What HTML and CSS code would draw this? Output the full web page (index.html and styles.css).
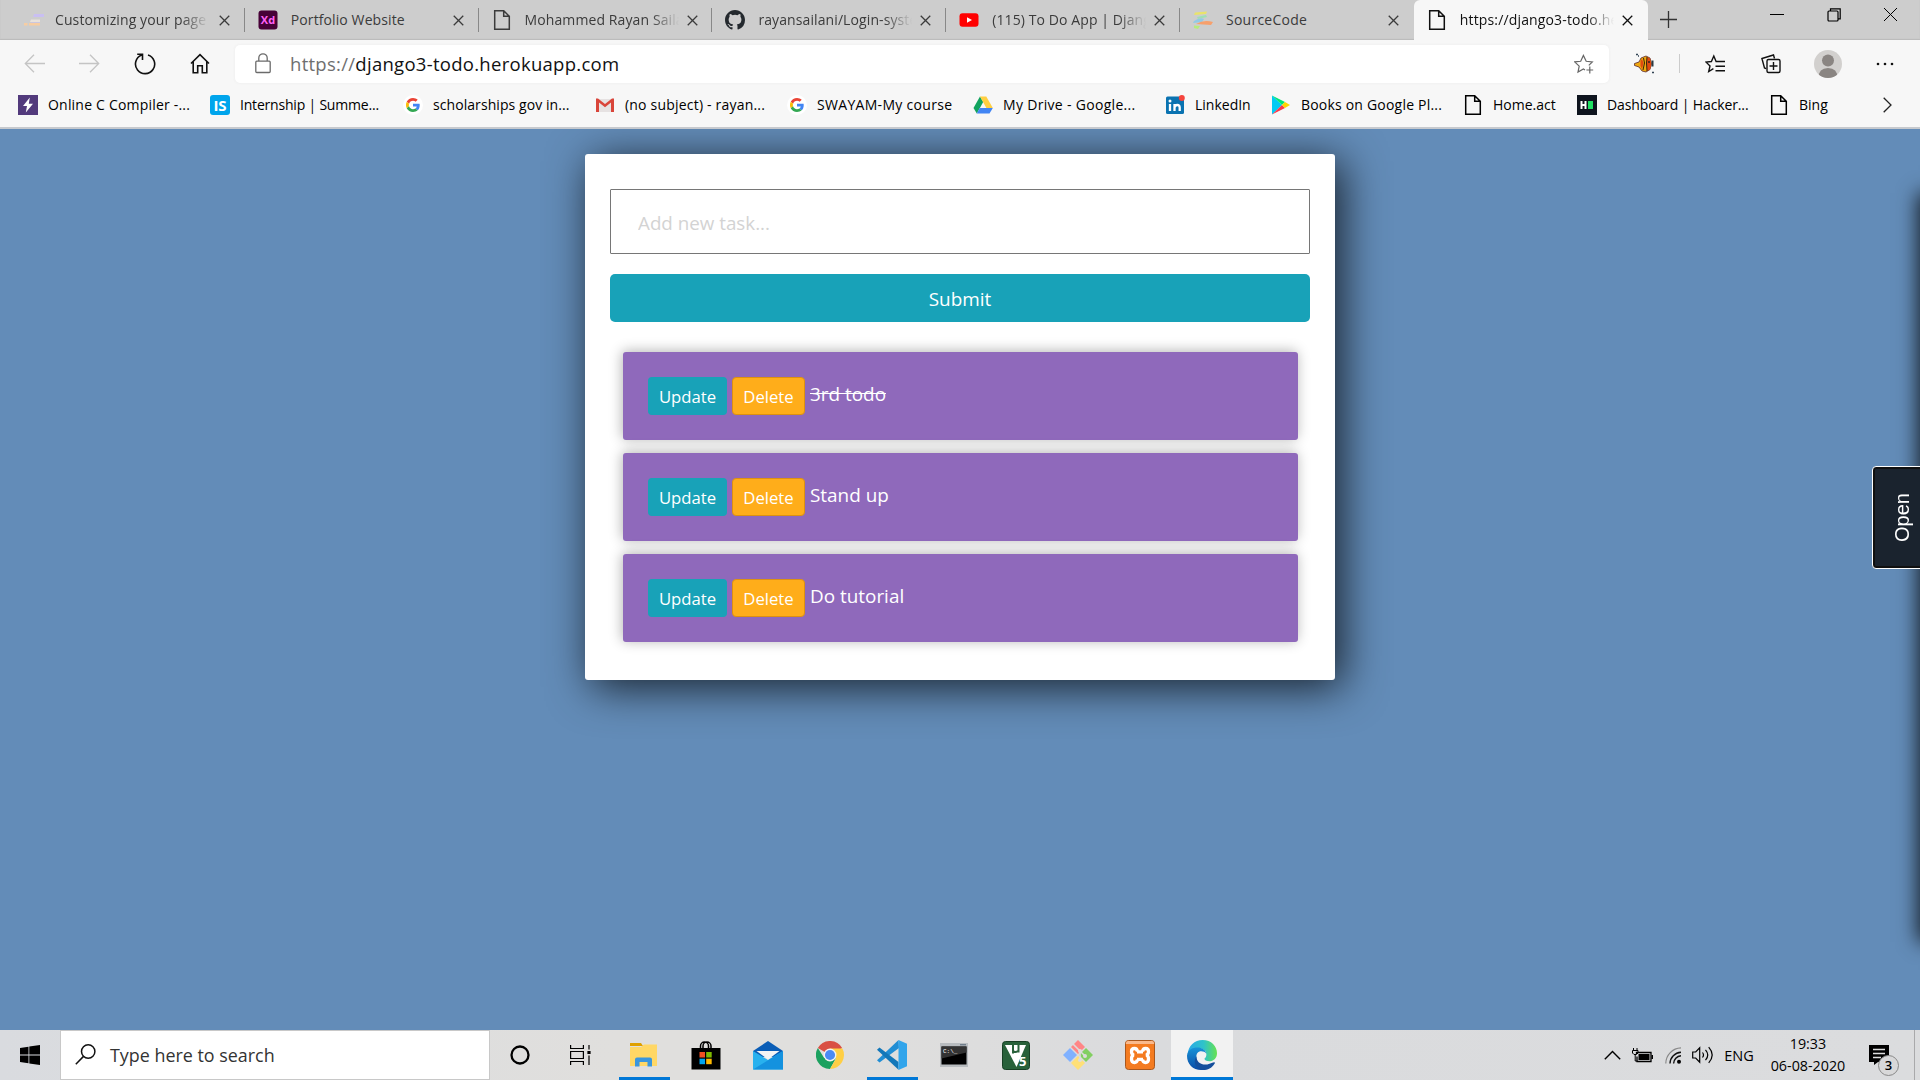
FILE: index.html
```html
<!DOCTYPE html>
<html lang="en">
<head>
<meta charset="utf-8">
<title>To Do</title>
<link rel="stylesheet" href="styles.css">
</head>
<body>
<svg width="0" height="0" class="defs" aria-hidden="true">
  <symbol id="page" viewBox="0 0 18 22"><path d="M1.7 1.7h9l5.6 5.6v13H1.7zM10.7 1.7v5.6h5.6" fill="none" stroke="currentColor" stroke-width="1.5"/></symbol>
  <symbol id="x" viewBox="0 0 12 12"><path d="M.8.8l10.4 10.4M11.2.8L.8 11.2" fill="none" stroke="currentColor" stroke-width="1.4"/></symbol>
  <symbol id="google" viewBox="0 0 48 48"><path fill="#EA4335" d="M24 9.5c3.5 0 6.700 1.200 9.200 3.600l6.900-6.900C35.900 2.400 30.500 0 24 0 14.600 0 6.500 5.400 2.600 13.200l8 6.200C12.400 13.700 17.700 9.500 24 9.500z"/><path fill="#4285F4" d="M47 24.500c0-1.600-.2-3.100-.4-4.500H24v9h12.900c-.6 3-2.200 5.500-4.700 7.200l7.700 6C44.400 38 47 32 47 24.500z"/><path fill="#FBBC05" d="M10.500 28.600c-.5-1.500-.8-3-.8-4.600s.3-3.100.8-4.600l-8-6.200C.9 16.500 0 20.100 0 24s.9 7.500 2.600 10.800z"/><path fill="#34A853" d="M24 48c6.500 0 11.900-2.100 15.900-5.800l-7.700-6c-2.200 1.500-4.900 2.300-8.200 2.300-6.300 0-11.600-4.200-13.500-9.900l-8 6.200C6.500 42.600 14.600 48 24 48z"/></symbol>
</svg>

<header class="browser">
  <div class="tabs">
    <div class="tab">
      <svg class="favicon" viewBox="0 0 20 20" width="20" height="20"><path d="M10 4h10v3H9zM7 10.500h9v2H7z" fill="#c9bff2"/><path d="M7 9.500h9v2.500H6z" fill="#e8e2dc"/><path d="M5 13h11v2.600H5zM0 13h3.500v2.600H0z" fill="#f7cda2"/></svg>
      <span class="tab-title fade t1">Customizing your page</span><svg class="close" width="11" height="11"><use href="#x"/></svg>
    </div>
    <div class="tab">
      <svg class="favicon" viewBox="0 0 20 20" width="20" height="20"><rect x=".5" y=".5" width="19" height="19" rx="3" fill="#470137"/><text x="10" y="14.300" text-anchor="middle" class="xd">Xd</text></svg>
      <span class="tab-title t2">Portfolio Website</span><svg class="close" width="11" height="11"><use href="#x"/></svg>
    </div>
    <div class="tab">
      <span class="favicon"><svg width="18" height="22"><use href="#page"/></svg></span>
      <span class="tab-title fade t3">Mohammed Rayan Sailani</span><svg class="close" width="11" height="11"><use href="#x"/></svg>
    </div>
    <div class="tab">
      <svg class="favicon" viewBox="0 0 16 16" width="20" height="20"><path fill="#24292e" d="M8 0C3.580 0 0 3.580 0 8c0 3.540 2.290 6.530 5.470 7.590.4.070.55-.17.55-.38 0-.19-.01-.82-.01-1.490-2.010.37-2.530-.49-2.690-.94-.09-.23-.48-.94-.82-1.130-.28-.15-.68-.52-.01-.53.63-.01 1.080.58 1.230.82.72 1.210 1.870.87 2.330.66.070-.52.28-.87.51-1.070-1.780-.2-3.640-.89-3.640-3.950 0-.87.31-1.590.82-2.150-.08-.2-.36-1.020.08-2.120 0 0 .67-.21 2.200.82a7.600 7.600 0 0 1 4 0c1.530-1.040 2.200-.82 2.200-.82.44 1.100.16 1.920.08 2.120.51.56.82 1.270.82 2.150 0 3.070-1.870 3.750-3.650 3.950.29.25.54.73.54 1.480 0 1.070-.01 1.930-.01 2.200 0 .21.15.46.55.38A8.010 8.010 0 0 0 16 8c0-4.420-3.580-8-8-8z"/></svg>
      <span class="tab-title fade t4">rayansailani/Login-system</span><svg class="close" width="11" height="11"><use href="#x"/></svg>
    </div>
    <div class="tab">
      <svg class="favicon" viewBox="0 0 20 20" width="20" height="20"><rect x=".5" y="3.200" width="19" height="13.600" rx="3" fill="#f00"/><path d="M8 7.200v5.600l5-2.800z" fill="#fff"/></svg>
      <span class="tab-title fade t5">(115) To Do App | Django</span><svg class="close" width="11" height="11"><use href="#x"/></svg>
    </div>
    <div class="tab">
      <svg class="favicon" viewBox="0 0 20 20" width="20" height="20"><path d="M2 2.500l12-1-1 2.500-12 1z" fill="#e9e36b"/><path d="M4 7l9-2 1 2-9 2z" fill="#9fe0b4"/><path d="M1 11q6-4 10-2l-2 3-9 1z" fill="#94c9e4"/><path d="M3 14q8-5 17-2l-2 3z" fill="#f7a06c"/><path d="M1 15.500l6 .5-2 3-4-1z" fill="#b6ec7c"/></svg>
      <span class="tab-title t6">SourceCode</span><svg class="close" width="11" height="11"><use href="#x"/></svg>
    </div>
    <div class="tab active">
      <span class="favicon"><svg width="18" height="22"><use href="#page"/></svg></span>
      <span class="tab-title fade t7">https://django3-todo.herokuapp.com</span><svg class="close" width="11" height="11"><use href="#x"/></svg>
    </div>
    <div class="new-tab"><svg width="17" height="17"><path d="M8.500 0v17M0 8.500h17" stroke="#333" stroke-width="1.300"/></svg></div>
    <div class="window-controls">
      <svg width="14" height="14"><path d="M0 6.500h14" stroke="#000"/></svg>
      <svg width="14" height="14" fill="none" stroke="#000" stroke-width="1.200"><rect x="1" y="3" width="10" height="10" rx="1"/><path d="M3.500 3V.8h9.700v10H11"/></svg>
      <svg width="13" height="13"><path d="M0 0l13 13M13 0L0 13" stroke="#000"/></svg>
    </div>
  </div>

  <div class="toolbar">
    <span class="tool off"><svg width="21" height="19" fill="none" stroke="currentColor" stroke-width="1.300"><path d="M21 9.500H1.500M10 .8L1.300 9.500l8.700 8.700"/></svg></span>
    <span class="tool off"><svg width="21" height="19" fill="none" stroke="currentColor" stroke-width="1.300"><path d="M0 9.500h19.500M11 .8l8.700 8.700-8.700 8.700"/></svg></span>
    <span class="tool"><svg width="22" height="22" fill="none" stroke="currentColor" stroke-width="1.600"><path d="M14 1.900A9.600 9.600 0 1 1 7.600 2.100M3.200 1.300h5.300v5.600"/></svg></span>
    <span class="tool"><svg width="20" height="21" fill="none" stroke="currentColor" stroke-width="1.600"><path d="M1 10.500L10 1.600l9 8.900M3.200 8.800v10.900h4.500v-7h4.600v7h4.500V8.800"/></svg></span>
    <div class="address">
      <svg class="lock" width="16" height="21" fill="none" stroke="#6b6b6b" stroke-width="1.300"><rect x=".8" y="8.200" width="14.400" height="11.300" rx="1"/><path d="M3.800 8V5a4.200 4.200 0 0 1 8.400 0v3"/></svg>
      <span class="url"><i>https://</i>django3-todo.herokuapp.com</span>
      <svg class="add-fav" width="20" height="20" fill="none" stroke="#666" stroke-width="1.200"><path d="M14.800 11.400l3.500-3.500-6.100-.6L9.400 1.400 6.700 7.300l-6 .6 4.500 4.200-1.200 6 5.400-3.100 1.600.9M15.800 12.600v6.800M12.400 16h6.800"/></svg>
    </div>
    <span class="tool fish"><svg width="22" height="22"><path d="M1.500 10.500l4.500-1.500 2-4 5-2 4 2 1.500 5.500-1.500 6-4 2.500-4-1-3-4-4.500-1.500z" fill="#f0a80f" stroke="#412" stroke-width=".7"/><path d="M14 4l3 1.500 1.500 5.500-1.500 5.500-3 1.500zM9 6l1.500 4-1.500 6-1.500-3V8z" fill="#e04a10"/><path d="M10.500 5l1 5-1.500 7M14 4l-.5 6 .5 8" stroke="#36200a" fill="none"/><path d="M18.500 7.500h2v6h-2z" fill="#293a42"/><path d="M3 1.500h2M19 19.500h2M5 3h1" stroke="#345" stroke-width="1.700"/><circle cx="16" cy="9" r=".9" fill="#222"/></svg></span>
    <span class="rule"></span>
    <span class="tool"><svg width="21" height="20" fill="none" stroke="currentColor" stroke-width="1.400"><path d="M8.400 14.700l-4.700 2.900 1.300-5.700L.9 8l5.500-.5L8.800 2l2.300 5.500H20M10.500 12.300H20M10.500 16.700H20"/></svg></span>
    <span class="tool collect"><svg width="20" height="20" fill="none" stroke="currentColor" stroke-width="1.400"><path d="M5.200 14.700L3.500 14 .9 4.500 12.500 1l1 3.500"/><rect x="6" y="5.500" width="13" height="13" rx="1.500"/><path d="M12.500 8v8M8.500 12h8"/></svg></span>
    <span class="tool avatar"><svg width="28" height="28"><defs><clipPath id="face"><circle cx="14" cy="14" r="14"/></clipPath></defs><g clip-path="url(#face)"><rect width="28" height="28" fill="#d2d0ce"/><circle cx="14" cy="10.500" r="6" fill="#8a8582"/><path d="M4.500 28q0-10 9.500-10t9.500 10z" fill="#8a8582"/></g></svg></span>
    <span class="tool more"><svg width="20" height="4" fill="#111"><circle cx="3" cy="2" r="1.300"/><circle cx="10" cy="2" r="1.300"/><circle cx="17" cy="2" r="1.300"/></svg></span>
  </div>

  <nav class="bookmarks">
    <a><svg width="20" height="20"><path d="M0 0h20v20H0z" fill="#523a7c"/><path d="M11.800 2.500L5 11h4l-1.200 6.500L15 8.800h-4.200z" fill="#fff"/></svg><span class="b1">Online C Compiler -...</span></a>
    <a><svg width="20" height="20"><rect width="20" height="20" rx="3" fill="#00a5ec"/><text x="10" y="15.500" text-anchor="middle" class="is">IS</text></svg><span class="b2">Internship | Summe...</span></a>
    <a><svg width="20" height="20"><circle cx="10" cy="10" r="10" fill="#fff"/><use href="#google" x="3" y="3" width="14" height="14"/></svg><span class="b3">scholarships gov in...</span></a>
    <a><svg width="20" height="20"><path d="M1 4h18v13H1z" fill="#e6e2e2"/><path d="M1 17V3.500h2L10 9l7-5.500h2V17h-3V7.500l-6 4.700-6-4.700V17z" fill="#d9453a"/></svg><span class="b4">(no subject) - rayan...</span></a>
    <a><svg width="20" height="20"><circle cx="10" cy="10" r="10" fill="#fff"/><use href="#google" x="3" y="3" width="14" height="14"/></svg><span class="b5">SWAYAM-My course</span></a>
    <a><svg width="20" height="20"><path d="M7 1.500L.5 13l3.300 5.500L10.200 7z" fill="#11a35e"/><path d="M7 1.500h6.300L19.800 13h-6.400z" fill="#ffcf42"/><path d="M6.800 13h13l-3.300 5.500H3.700z" fill="#4285f4"/></svg><span class="b6">My Drive - Google...</span></a>
    <a><svg width="20" height="20"><rect x="1" y="1.500" width="18" height="17.500" rx="1.500" fill="#0a73b1"/><path d="M5 9v7M9.500 16V9M9.500 12.500q.5-2.500 2.800-2.500t2.400 2.500V16" stroke="#fff" stroke-width="2.300" fill="none"/><circle cx="5" cy="6" r="1.500" fill="#fff"/><circle cx="16.800" cy="3" r="3" fill="#f5443d"/></svg><span class="b7">LinkedIn</span></a>
    <a><svg width="20" height="20"><path d="M1 .5v19L11 10z" fill="#00cbf3"/><path d="M1 .5L14 7l-3 3z" fill="#00e577"/><path d="M1 19.500L14 13l-3-3z" fill="#f8384c"/><path d="M14 7l5 3-5 3-3-3z" fill="#ffd500"/></svg><span class="b8">Books on Google Pl...</span></a>
    <a><svg width="20" height="22"><use href="#page" x="1" width="18" height="22"/></svg><span class="b9">Home.act</span></a>
    <a><svg width="20" height="20"><path d="M0 0h20v20H0z" fill="#0e141e"/><path d="M4.500 6v8M8.500 6v8M4.500 10h4" stroke="#fff" stroke-width="2"/><path d="M11 6h5v8h-5z" fill="#1fe062"/></svg><span class="b10">Dashboard | Hacker...</span></a>
    <a><svg width="20" height="22"><use href="#page" x="1" width="18" height="22"/></svg><span class="b11">Bing</span></a>
    <svg class="overflow" width="9" height="16"><path d="M.7.700L8 8 .7 15.300" fill="none" stroke="#222" stroke-width="1.300"/></svg>
  </nav>
</header>

<main class="page">
  <section class="card">
    <form class="add-task">
      <input type="text" placeholder="Add new task...">
      <button type="button" class="submit">Submit</button>
    </form>
    <div class="tasks">
      <div class="task"><a class="btn update">Update</a><a class="btn delete">Delete</a><span class="name"><s>3rd todo</s></span></div>
      <div class="task"><a class="btn update">Update</a><a class="btn delete">Delete</a><span class="name">Stand up</span></div>
      <div class="task"><a class="btn update">Update</a><a class="btn delete">Delete</a><span class="name">Do tutorial</span></div>
    </div>
  </section>
  <div class="drawer"></div>
  <button type="button" class="open"><span>Open</span></button>
</main>

<footer class="taskbar">
  <span class="start"><svg width="20" height="20"><path d="M0 3l8.500-1.200v7.800H0zM9.300 1.600L20 0v9.600H9.300zM0 10.400h8.500v7.900L0 17zM9.300 10.400H20V20L9.300 18.400z"/></svg></span>
  <div class="search"><svg width="21" height="21" fill="none" stroke="#111" stroke-width="1.500"><circle cx="13.200" cy="7.500" r="6.700"/><path d="M8.500 12.400L.8 20.200"/></svg><span>Type here to search</span></div>
  <div class="apps">
    <span class="app cortana"><svg width="20" height="20"><circle cx="10" cy="10" r="8.500" fill="none" stroke="#000" stroke-width="2.300"/></svg></span>
    <span class="app view"><svg width="21" height="20" fill="none" stroke="#000" stroke-width="1.200"><path d="M.6 0v3.500h12.800V0M.6 20v-3.500h12.800V20M.6 6.500h12.800v7H.6zM19 0v4.500M19 10.500V20"/><path d="M17.400 6h3.200v3h-3.200z" fill="#000" stroke="none"/></svg></span>
    <span class="app running"><svg width="28" height="24"><path d="M0 0h11l2 3H0z" fill="#dfa000"/><path d="M0 4h11l3-2.500h13V23H0z" fill="#ffd765"/><path d="M5 23.500v-7q0-2 2-2h13q2 0 2 2v7h-4.500V19h-8v4.500z" fill="#3a96dd"/></svg></span>
    <span class="app"><svg width="30" height="30"><path d="M9.500 9V6a4 4 0 0 1 8 0v3M12 9V6a4 4 0 0 1 8 0v3" fill="none" stroke="#000" stroke-width="1.500"/><path d="M.5 8h29v21.500H.5z"/><path d="M8.500 12h5.500v5.500H8.500z" fill="#f25022"/><path d="M15.200 12h5.500v5.500h-5.500z" fill="#7fba00"/><path d="M8.500 18.700h5.500v5.500H8.500z" fill="#00a4ef"/><path d="M15.200 18.700h5.500v5.500h-5.500z" fill="#ffb900"/></svg></span>
    <span class="app"><svg width="30" height="30"><path d="M0 11L15 1l15 10v6H0z" fill="#0a5db6"/><path d="M0 11l15 9 15-9v18.500H0z" fill="#28b1ee"/><path d="M0 29.500L30 11v18.500z" fill="#1492df"/><path d="M3.500 11h23L15 19.500z" fill="#f4f4f4"/></svg></span>
    <span class="app"><svg width="28" height="28" viewBox="0 0 48 48"><path d="M24 24L3.200 12A24 24 0 0 1 44.800 12z" fill="#d94f43"/><path d="M3.200 12A24 24 0 0 0 24 48l10-18-20-1z" fill="#1ca15f"/><path d="M24 13h21.300A24 24 0 0 1 24 48l10.400-18z" fill="#ffcf44"/><circle cx="24" cy="24" r="11" fill="#f3f3f3"/><circle cx="24" cy="24" r="8.700" fill="#4b8bf5"/></svg></span>
    <span class="app running"><svg width="30" height="30"><path d="M21.500 0L3 17.500l-3 2.700 2.500 2.300L22 8z" fill="#218ed4"/><path d="M2.500 7.500L0 9.800l21.500 20V22z" fill="#1277b9"/><path d="M21.500 0L30 3.700v22.600L21.500 30z" fill="#32a5eb"/></svg></span>
    <span class="app"><svg width="28" height="24"><path d="M0 0h28v24H0z" fill="#b8bcbf"/><path d="M1.500 3.500h25v18h-25z" fill="#000"/><path d="M1.500 3.500h25v6l-25 6z" fill="#333"/><path d="M20 1.800h6" stroke="#567"/><text x="3" y="9.500" class="prompt">C:\_</text></svg></span>
    <span class="app"><svg width="28" height="29"><rect x=".5" y=".5" width="27" height="28" rx="3" fill="#28613a" stroke="#173f24"/><path d="M3 4h21L14.500 26z" fill="#fff"/><path d="M11 4v8.500M11 10q2.500 2 5 0M16.500 4v7.500" fill="none" stroke="#28613a" stroke-width="2"/><text x="17" y="25" class="five">5</text></svg></span>
    <span class="app"><svg width="30" height="30"><path d="M15 0l7 7-7 7-7-7z" fill="#ff8686"/><path d="M7 8l7 7-7 7-7-7z" fill="#80b1ff"/><path d="M23 8l7 7-7 7-7-7z" fill="#83cf62"/><path d="M15 16l7 7-7 7-7-7z" fill="#ffe077"/><path d="M10 4l7 7v9M17 11l5 5" stroke="#dddcdc" stroke-width="1.600" fill="none"/><g fill="#dddcdc"><circle cx="17" cy="11" r="2"/><circle cx="17" cy="20" r="2"/><circle cx="22" cy="16" r="2"/></g></svg></span>
    <span class="app"><svg width="30" height="30"><rect x=".5" y=".5" width="29" height="29" rx="3" fill="#f47b20" stroke="#a9571d"/><path d="M1 4V3q0-2 2-2h24q2 0 2 2v1z" fill="#f9b98c"/><path d="M12.500 11.500Q12 8.500 9.500 8.500 6.500 8.500 6.500 11.500T9 15.200Q6.500 15.500 6.500 19T9.500 22.500Q12 22.500 12.500 19.500M17.500 11.500Q18 8.500 20.500 8.500 23.500 8.500 23.500 11.500T21 15.200Q23.500 15.500 23.500 19T20.500 22.500Q18 22.500 17.500 19.500M12 11.800h6M12 19.300h6" fill="none" stroke="#fff" stroke-width="3.300"/></svg></span>
    <span class="app running current"><svg width="30" height="30" viewBox="0 0 48 48"><defs><linearGradient id="e1" x1="0" x2="1"><stop offset="0" stop-color="#27a8e8"/><stop offset=".55" stop-color="#2fc3c9"/><stop offset="1" stop-color="#67e24f"/></linearGradient><linearGradient id="e2" y2="1" x2="0"><stop stop-color="#1793d8"/><stop offset="1" stop-color="#0b4ba5"/></linearGradient></defs><path d="M1 23C2 9 12 0 25 0c14 0 23 10 23 21 0 8-6 13-12 13-5 0-8-2-8-4 0-1 3-2 3-7 0-6-5-10-12-10C10 13 3 18 1 23z" fill="url(#e1)"/><path d="M0 25c1-9 8-13 17-13 7 0 13 4 14 10-2-3-5-4-8-4-6 0-8 4-8 9 0 12 11 18 18 16-2 3-6 5-10 5C9 48 0 38 0 25z" fill="url(#e2)"/><path d="M15 26c0 11 11 16 21 12 4-1 7-3 8-2 1 0 1 1 0 2-4 7-11 10-18 10-10 0-18-11-11-22z" fill="#154f9c"/></svg></span>
  </div>
  <div class="tray">
    <svg class="up" width="17" height="10"><path d="M.8 9.200l7.700-7.700 7.700 7.700" fill="none" stroke="#000" stroke-width="1.400"/></svg>
    <svg class="battery" width="21" height="15"><path d="M4.500 6V4.500H19v9H5V8.500" fill="none" stroke="#000" stroke-width="1.300"/><path d="M6.500 6h11v6H6.500zM19.500 7H21v4h-1.500z"/><path d="M1.500 0v2M5 0v2M.5 2.500H6V5L4.500 6.500H2L.5 5zM3.200 6v7h2" fill="none" stroke="#000"/></svg>
    <svg class="wifi" width="17" height="17" fill="none"><path d="M.8 16.500A15.700 15.700 0 0 1 16 .9" stroke="#888" stroke-width="1.200"/><path d="M5 16.500A11.500 11.500 0 0 1 16 5.200M8.600 16.500a8 8 0 0 1 7.400-7.800" stroke="#111" stroke-width="1.400"/><circle cx="14" cy="14.800" r="2" fill="#000"/></svg>
    <svg class="volume" width="22" height="18" fill="none" stroke="#000" stroke-width="1.200"><path d="M.7 6h3l4-4.200v14.400l-4-4.200h-3zM10.500 6.500q2 2.500 0 5M13.500 3.800q4.500 5.200 0 10.400M16.700 1.200q7 7.800 0 15.600"/></svg>
    <span class="lang">ENG</span>
    <div class="clock"><span>19:33</span><span>06-08-2020</span></div>
    <div class="notify"><svg width="20" height="20"><path d="M0 0h20v17H9l-4 3v-3H0z"/><path d="M4 4.500h12M4 8.500h12M4 12.500h8" stroke="#ddd" stroke-width="1.400"/></svg><b>3</b></div>
  </div>
</footer>
</body>
</html>
```
FILE: styles.css
```css
* { box-sizing: border-box; }
body { margin: 0; width: 1920px; height: 1080px; overflow: hidden; display: flex; flex-direction: column; font-family: "Open Sans", "Noto Sans", sans-serif; color: #000; }
.defs { position: absolute; }
svg { display: block; flex: none; }

.browser { height: 129px; flex: none; background: #f7f7f7; border-bottom: 2px solid #c6c9ce; }
.tabs { height: 40px; display: flex; background: #cdcdcd; box-shadow: inset 0 -1px 1px #bbb; padding-left: 11px; }
.tab { position: relative; width: 233.8px; height: 40px; padding: 0 14px 0 13px; display: flex; align-items: center; color: #3b3b3b; flex: none; }
.tab:first-child .tab-title { margin-left: -1px; margin-right: 10px; }
.tab:not(.active)::after { content: ""; position: absolute; right: 0; top: 8px; height: 24px; border-right: 1px solid #888; }
.tab:nth-child(6)::after { display: none; }
.tab.active { background: #f7f7f7; border-radius: 6px 6px 0 0; color: #111; }
.favicon { width: 20px; margin-right: 12px; display: flex; justify-content: center; flex: none; }
.tab-title { width: 154px; overflow: hidden; white-space: nowrap; font-size: 14px; margin-left: 1px; margin-right: 8px; line-height: 22px; letter-spacing: .1px; }
.t6 { letter-spacing: .25px; }
.t7 { letter-spacing: .15px; }
.fade { -webkit-mask-image: linear-gradient(90deg, #000 82%, transparent); mask-image: linear-gradient(90deg, #000 82%, transparent); }
.xd { font: bold 11px "Open Sans", sans-serif; fill: #ff61f6; }
.is { font: bold 15px "Open Sans", sans-serif; fill: #fff; }
.new-tab { padding: 11px 0 0 12px; }
.window-controls { margin-left: auto; display: flex; gap: 43px; padding: 8px 23px 0 0; }

.toolbar { height: 47px; display: flex; align-items: center; padding-left: 7px; color: #111; }
.tool { width: 55px; display: flex; justify-content: center; flex: none; }
.off { color: #c4c4c4; }
.address { width: 1374px; height: 38px; margin-left: 8px; background: #fff; border-radius: 5px; display: flex; align-items: center; padding: 0 15px 0 20px; box-shadow: 0 0 3px #eaeaea; }
.url { margin-left: 19px; font-size: 18.500px; line-height: 30px; letter-spacing: .28px; }
.url i { font-style: normal; color: #6f6f6f; }
.add-fav { margin-left: auto; }
.fish { width: 54px; margin-left: 8px; }
.rule { width: 1px; height: 19px; background: #ccc; margin: 0 8px; }
.collect { width: 56px; }
.avatar, .more { width: 57px; }

.bookmarks { display: grid; grid-template-columns: 192px 193px 192px 192px 186px 192px 106px 192px 114px 192px 114px 1fr; align-items: center; height: 36px; padding-left: 18px; }
.bookmarks a { display: flex; align-items: center; gap: 10px; white-space: nowrap; font-size: 14px; line-height: 22px; }
.b1, .b4, .b8 { letter-spacing: .2px; }
.b2 { letter-spacing: -.2px; }
.b3 { letter-spacing: .07px; }
.b5, .b6 { letter-spacing: .31px; }
.b10 { letter-spacing: -.12px; }

.page { position: relative; flex: 1; overflow: hidden; background: #638cb8; padding-top: 25px; }
.card { width: 750px; height: 526px; margin: 0 auto; background: #fff; border-radius: 3px; padding: 35px 25px; box-shadow: 7px 7px 44px rgba(0, 0, 0, .78); }
.add-task { display: flex; flex-direction: column; gap: 20px; }
.add-task input { height: 65px; border: 1px solid #767676; border-radius: 1px; padding: 2px 27px 0; font: 18.800px "Open Sans", sans-serif; outline: 0; }
.add-task input::placeholder { color: #d3d3d3; opacity: 1; }
.submit { height: 48px; border: 0; border-radius: 5px; background: #18a2b8; color: #fff; font: 18.900px "Open Sans", sans-serif; padding-top: 2px; }
.tasks { display: flex; flex-direction: column; gap: 13px; padding: 30px 12px 0 13px; }
.task { height: 88px; border-radius: 3px; background: #8f69bb; color: #fff; padding: 25px; display: flex; gap: 5px; box-shadow: -1px -1px 13px rgba(0, 0, 0, .3); }
.btn { height: 38px; border-radius: 4px; font-size: 16.700px; line-height: 39px; text-align: center; }
.update { width: 79px; background: #18a2b8; }
.delete { width: 73px; background: #ffad1a; border: 1px solid #dd9110; line-height: 37px; }
.name { font-size: 18.900px; line-height: 35px; }
.drawer { position: absolute; left: 1920px; top: 66px; width: 300px; height: 745px; box-shadow: 0 0 19px 2px rgba(0, 0, 0, .8); }
.open { position: absolute; left: 1872px; top: 337px; width: 58px; height: 103px; background: #1a232e; border: 1px solid #fff; border-radius: 4px; box-shadow: inset 0 0 0 2px #101010; padding: 0; color: #fff; }
.open span { display: block; writing-mode: vertical-rl; transform: rotate(180deg); font: 20px/22px "Liberation Sans", Arial, sans-serif; width: 22px; margin: 0 0 0 18px; text-align: center; }

.taskbar { height: 50px; flex: none; display: flex; background: linear-gradient(90deg, #d9dbdf, #e0dfdd 32%, #e0dfdd 42%, #dadbdd 60%, #dbdcde); }
.start { width: 60px; display: flex; align-items: center; justify-content: center; }
.search { width: 430px; background: #fff; border: 1px solid #c8c8c8; display: flex; align-items: center; padding: 0 0 1px 14px; gap: 14px; color: #333; font-size: 17.900px; }
.apps { display: flex; }
.app { width: 62px; display: flex; align-items: center; justify-content: center; position: relative; }
.cortana { width: 60px; }
.view { margin-right: 1px; left: -1px; }
.running::after { content: ""; position: absolute; left: 6px; right: 5px; bottom: 0; height: 3px; background: #0078d7; }
.current { background: #f2f2f2; }
.current::after { left: 0; right: 0; }
.prompt { font: 6px "Liberation Mono", monospace; fill: #fff; }
.five { font: bold 13px "Open Sans", sans-serif; fill: #fff; }
.tray { flex: 1; margin-left: auto; display: flex; align-items: center; justify-content: flex-end; border-right: 1px solid #a9a9ab; margin-right: 5px; font-size: 14px; }
.battery { margin-left: 11px; }
.wifi { margin-left: 12px; }
.volume { margin-left: 10px; }
.lang { width: 50px; text-align: center; font-size: 14.500px; }
.clock { width: 100px; margin-left: -6px; margin-right: 11px; display: flex; flex-direction: column; align-items: center; line-height: 22px; font-size: 14.300px; }
.notify { position: relative; width: 45px; height: 20px; }
.notify b { position: absolute; left: 9px; top: 10px; width: 21px; height: 21px; border: 1px solid #888; border-radius: 50%; background: #d8d8d9; font-size: 13px; line-height: 19px; text-align: center; font-weight: 600; }
```
